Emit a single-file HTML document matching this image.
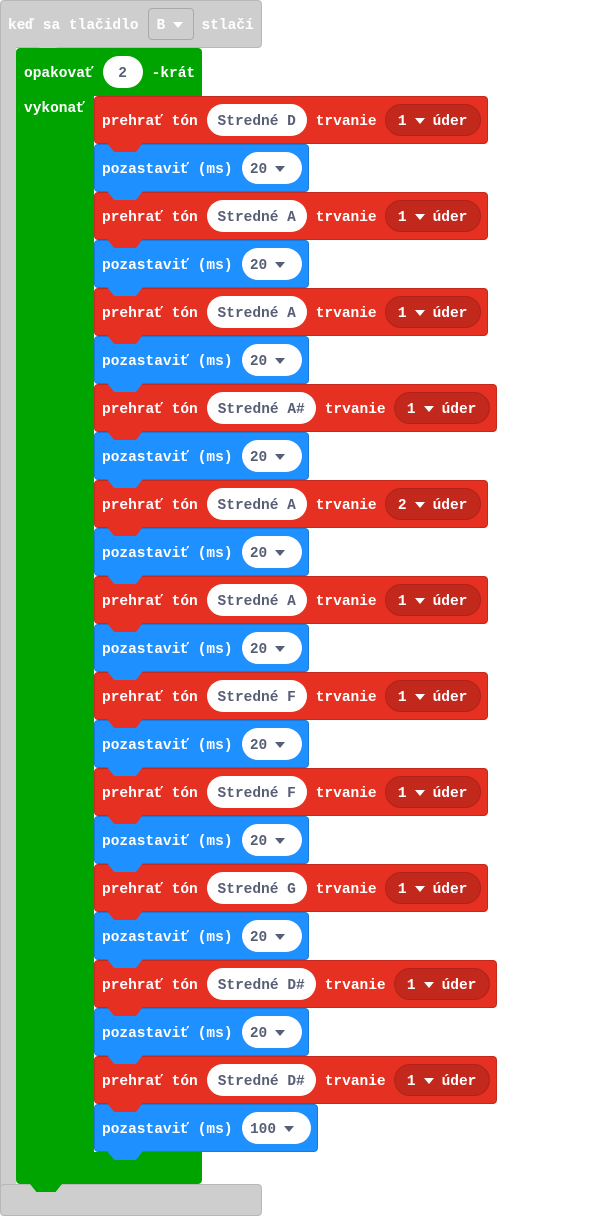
<!DOCTYPE html>
<html><head><meta charset="utf-8"><style>
*{box-sizing:border-box;margin:0;padding:0}
body{width:601px;height:1216px;background:#fff;position:relative;overflow:hidden;font-family:"Liberation Mono",monospace;font-weight:bold;font-size:14.5px;color:#fff}
.abs{position:absolute}
.gray{background:#cecece;border:1px solid #b8b8b8;border-radius:4px}
.green{background:#00a400}
.blk{position:absolute;left:94px;height:48px;border-radius:4px;display:flex;align-items:center;padding-left:7px;padding-top:4px;white-space:nowrap}
.red{background:#e63022;border:1px solid #c3281d}
.blue{background:#1e90ff;border:1px solid #1a7ad9}
.tab{position:absolute;left:12px;bottom:-9px;width:36px;height:9px;clip-path:polygon(0 0,100% 0,80% 100%,20% 100%)}
.red .tab{background:#e63022}
.blue .tab{background:#1e90ff}
.pill{background:#fff;color:#575e75;height:32px;border-radius:16px;display:flex;align-items:center;justify-content:center;margin-top:-4px;padding-top:4px}
.dk{background:#c3281d;border:1px solid #b02218;height:32px;border-radius:16px;display:flex;align-items:center;justify-content:center;color:#fff;margin-top:-4px;padding-top:4px}
.tri{display:inline-block;width:0;height:0;border-left:5px solid transparent;border-right:5px solid transparent;border-top:6px solid currentColor;margin:-3px 8px 0}
</style></head><body>
<div class="abs gray" style="left:0;top:0;width:262px;height:48px"></div>
<div class="abs" style="left:0;top:40px;width:16px;height:1150px;background:#cecece;border-left:1px solid #b8b8b8"></div>
<div class="abs gray" style="left:0;top:1184px;width:262px;height:32px"></div>
<div class="abs" style="left:8px;top:0;height:48px;padding-top:4px;color:#fff;white-space:nowrap;display:flex;align-items:center">keď sa tlačidlo
<span style="display:inline-flex;align-items:center;margin:-4px 8px 0 9px;padding-top:4px;width:46px;height:32px;border:1px solid #aaa;border-radius:4px;background:#cecece;padding-left:8px">B<span class="tri"></span></span>stlačí</div>
<div class="abs" style="left:34px;top:43px;width:28px;height:6px;background:#cecece;clip-path:polygon(0 0,100% 0,75% 100%,25% 100%)"></div>
<div class="abs green" style="left:16px;top:48px;width:186px;height:48px;border-radius:4px 4px 0 0"></div>
<div class="abs green" style="left:16px;top:90px;width:78px;height:1070px"></div>
<div class="abs green" style="left:16px;top:1152px;width:186px;height:32px;border-radius:0 0 4px 4px"></div>
<div class="abs green" style="left:30px;top:1184px;width:32px;height:8px;clip-path:polygon(0 0,100% 0,80% 100%,20% 100%)"></div>
<div class="abs" style="left:24px;top:48px;height:48px;padding-top:4px;display:flex;align-items:center;white-space:nowrap">opakovať<span class="pill" style="width:40px;margin:-4px 9px 0">2</span>-krát</div>
<div class="abs" style="left:24px;top:101px">vykonať</div>
<div id="c"></div>
<script>
var d=[["D","1",0],["A","1",0],["A","1",0],["A#","1",1],["A","2",0],["A","1",0],["F","1",0],["F","1",0],["G","1",0],["D#","1",1],["D#","1",1]];
var h="";
d.forEach(function(r,i){
var y=96+i*96,w=r[2];
h+='<div class="blk red" style="top:'+y+'px;width:'+(w?403:394)+'px;z-index:'+(100-2*i)+'">prehrať tón<span class="pill" style="width:'+(w?109:100)+'px;margin-left:9px;margin-right:9px">Stredné '+r[0]+'</span>trvanie<span class="dk" style="width:96px;margin-left:8px">'+r[1]+'<span class="tri"></span>úder</span><div class="tab"></div></div>';
var last=i==10;
h+='<div class="blk blue" style="top:'+(y+48)+'px;width:'+(last?224:215)+'px;z-index:'+(99-2*i)+'">pozastaviť (ms)<span class="pill" style="width:'+(last?69:60)+'px;margin-left:9px">'+(last?'100':'20')+'<span class="tri"></span></span><div class="tab"></div></div>';
});
document.getElementById("c").innerHTML=h;
</script>
</body></html>
